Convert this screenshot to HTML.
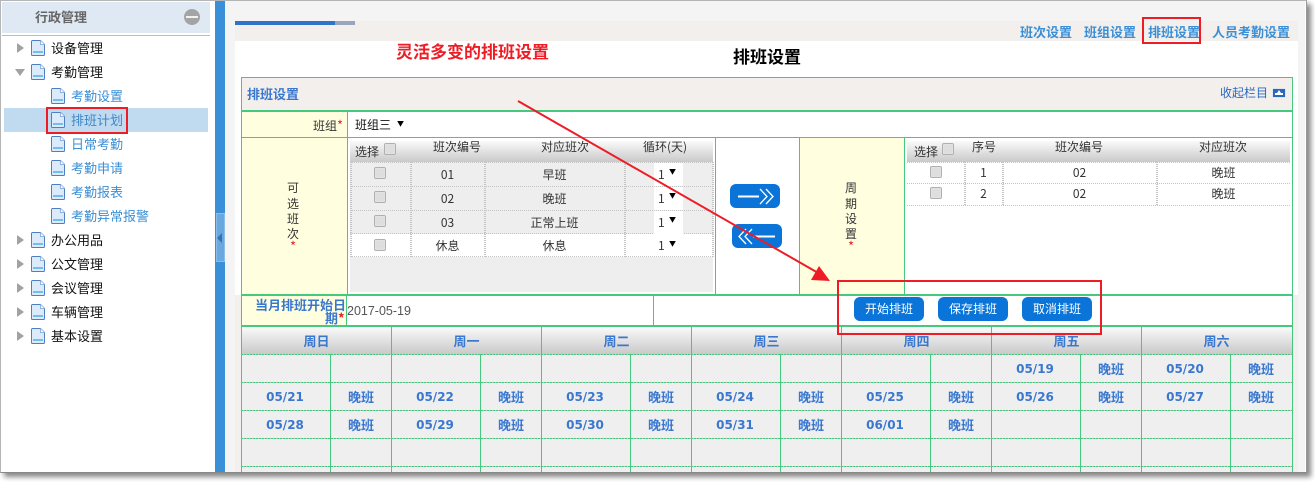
<!DOCTYPE html>
<html lang="zh"><head><meta charset="utf-8"><title>排班设置</title>
<style>
html,body{margin:0;padding:0;background:#fff;width:1315px;height:482px;overflow:hidden}
body{position:relative;font:13px/16px "WenQuanYi Zen Hei","Noto Sans CJK SC",sans-serif;color:#222}
div,span.t,a{position:absolute}
.t{white-space:nowrap;position:absolute}
.c{text-align:center}
.g{background:#45c97f}
.y{background:#ffffe0}
.s{color:#111}
.b{color:#3a8fd6}
.x{font-size:12px;color:#333}
.a{font-size:7px;color:#000}
.hd{background:linear-gradient(#fafafa,#c9c9c9)}
.cb{width:10px;height:10px;border:1px solid #b0b0b0;border-radius:2px;background:#dedede;box-shadow:inset 0 0 1px #fff}
.dv{width:1px;background:repeating-linear-gradient(#c4c4c4 0 1px,transparent 1px 2px);border-right:1px solid transparent}
.dh{height:1px;background:repeating-linear-gradient(90deg,#c4c4c4 0 1px,transparent 1px 2px)}
.btn{background:#0a74d8;border-radius:6px;color:#fff;font-size:12px;text-align:center;height:24px;line-height:24px;width:70px;top:297px}
.calh{top:327px;height:27px;line-height:27px;text-align:center;font-weight:bold;color:#3a78d0;width:149px}
.d{font:bold 12px/16px "DejaVu Sans",sans-serif;color:#3a78d0;text-align:center;width:40px}
.w{font-weight:bold;color:#3a78d0;text-align:center;width:60px}
.hl{left:241px;width:1052px;height:1px;background:repeating-linear-gradient(90deg,#45c97f 0 2px,#b9c9bd 2px 3px)}
.vl{top:354px;height:118px;width:1px;background:#45c97f}
.sel{width:29px;height:23px;background:#fff}
</style></head>
<body>
<svg width="0" height="0" style="position:absolute"><defs>
<symbol id="doc" viewBox="0 0 14 16"><path d="M.5 1.5a1 1 0 0 1 1-1h8l4 4v10a1 1 0 0 1-1 1h-11a1 1 0 0 1-1-1z" fill="#dcebfb" stroke="#4f7fc0"/><path d="M9.5 .5v4h4" fill="#fff" stroke="#8fb2de"/><rect x="2" y="11" width="10" height="2" fill="#74bdf3"/></symbol>
<symbol id="r" viewBox="0 0 7 10"><path d="M0 0l7 5-7 5z" fill="#a2a2a2"/></symbol>
<symbol id="dn" viewBox="0 0 10 7"><path d="M0 0h10L5 7z" fill="#a2a2a2"/></symbol>
</defs></svg>

<!-- window -->
<div style="left:0;top:0;width:1305px;height:471px;border:1px solid #b5b5b5;border-right-color:#999;border-bottom-color:#888;background:#fff;box-shadow:4px 4px 5px #888"></div>

<!-- sidebar -->
<div style="left:2px;top:2px;width:208px;height:31px;background:#dfe9f3"></div>
<div style="left:2px;top:35px;width:208px;height:1px;background:#bbb"></div>
<span class="t" style="left:35px;top:9px;font-weight:bold;color:#666">行政管理</span>
<div style="left:184px;top:9px;width:16px;height:16px;border-radius:50%;background:#a4a4a4"></div>
<div style="left:186px;top:16px;width:12px;height:2px;background:#f2f2f2"></div>
<div style="left:4px;top:108px;width:204px;height:24px;background:#c0daf0"></div>

<svg class="t" style="left:17px;top:43px" width="7" height="10"><use href="#r"/></svg>
<svg class="t" style="left:15px;top:69px" width="10" height="7"><use href="#dn"/></svg>
<svg class="t" style="left:17px;top:235px" width="7" height="10"><use href="#r"/></svg>
<svg class="t" style="left:17px;top:259px" width="7" height="10"><use href="#r"/></svg>
<svg class="t" style="left:17px;top:283px" width="7" height="10"><use href="#r"/></svg>
<svg class="t" style="left:17px;top:307px" width="7" height="10"><use href="#r"/></svg>
<svg class="t" style="left:17px;top:331px" width="7" height="10"><use href="#r"/></svg>

<svg class="t" style="left:31px;top:40px" width="14" height="16"><use href="#doc"/></svg>
<svg class="t" style="left:31px;top:64px" width="14" height="16"><use href="#doc"/></svg>
<svg class="t" style="left:51px;top:88px" width="14" height="16"><use href="#doc"/></svg>
<svg class="t" style="left:51px;top:112px" width="14" height="16"><use href="#doc"/></svg>
<svg class="t" style="left:51px;top:136px" width="14" height="16"><use href="#doc"/></svg>
<svg class="t" style="left:51px;top:160px" width="14" height="16"><use href="#doc"/></svg>
<svg class="t" style="left:51px;top:184px" width="14" height="16"><use href="#doc"/></svg>
<svg class="t" style="left:51px;top:208px" width="14" height="16"><use href="#doc"/></svg>
<svg class="t" style="left:31px;top:232px" width="14" height="16"><use href="#doc"/></svg>
<svg class="t" style="left:31px;top:256px" width="14" height="16"><use href="#doc"/></svg>
<svg class="t" style="left:31px;top:280px" width="14" height="16"><use href="#doc"/></svg>
<svg class="t" style="left:31px;top:304px" width="14" height="16"><use href="#doc"/></svg>
<svg class="t" style="left:31px;top:328px" width="14" height="16"><use href="#doc"/></svg>

<span class="t s" style="left:51px;top:40px">设备管理</span>
<span class="t s" style="left:51px;top:64px">考勤管理</span>
<span class="t b" style="left:71px;top:88px">考勤设置</span>
<span class="t b" style="left:71px;top:112px;color:#3f86c9">排班计划</span>
<span class="t b" style="left:71px;top:136px">日常考勤</span>
<span class="t b" style="left:71px;top:160px">考勤申请</span>
<span class="t b" style="left:71px;top:184px">考勤报表</span>
<span class="t b" style="left:71px;top:208px">考勤异常报警</span>
<span class="t s" style="left:51px;top:232px">办公用品</span>
<span class="t s" style="left:51px;top:256px">公文管理</span>
<span class="t s" style="left:51px;top:280px">会议管理</span>
<span class="t s" style="left:51px;top:304px">车辆管理</span>
<span class="t s" style="left:51px;top:328px">基本设置</span>
<div style="left:46px;top:107px;width:78px;height:23px;border:2px solid #ee1c25"></div>

<!-- splitter -->
<div style="left:215px;top:1px;width:10px;height:471px;background:#398fd8"></div>
<div style="left:216px;top:213px;width:7px;height:47px;background:#6aa9e0;border:1px solid #8cbde8"></div>
<svg class="t" style="left:217px;top:233px" width="6" height="10"><path d="M5 0L0 5l5 5z" fill="#2f74b8"/></svg>

<!-- main -->
<div style="left:225px;top:1px;width:1080px;height:471px;background:#f4f4f4"></div>
<div style="left:235px;top:21px;width:1063px;height:451px;background:#fff"></div>
<div style="left:235px;top:21px;width:1063px;height:20px;background:#f2efed"></div>
<div style="left:235px;top:21px;width:100px;height:4px;background:#2f74c8"></div>
<div style="left:335px;top:21px;width:20px;height:4px;background:#99a5bb"></div>
<div style="left:235px;top:295px;width:6px;height:177px;background:#f2efed"></div>
<div style="left:1293px;top:295px;width:5px;height:177px;background:#f2efed"></div>

<span class="t" style="left:1020px;top:24px;font-weight:bold;color:#3a8fd6">班次设置</span>
<span class="t" style="left:1084px;top:24px;font-weight:bold;color:#3a8fd6">班组设置</span>
<span class="t" style="left:1148px;top:24px;font-weight:bold;color:#3a8fd6">排班设置</span>
<span class="t" style="left:1212px;top:24px;font-weight:bold;color:#3a8fd6">人员考勤设置</span>
<div style="left:1142px;top:17px;width:55px;height:23px;border:2px solid #ee1c25"></div>

<span class="t" style="left:396px;top:41px;font-size:17px;line-height:20px;font-weight:bold;color:#ee1c25">灵活多变的排班设置</span>
<span class="t" style="left:733px;top:46px;font-size:17px;line-height:20px;font-weight:bold;color:#000">排班设置</span>

<!-- form frame -->
<div style="left:242px;top:78px;width:1050px;height:32px;background:#f2efed"></div>
<span class="t" style="left:247px;top:86px;font-weight:bold;color:#3a78d0">排班设置</span>
<span class="t" style="left:1220px;top:85px;font-size:12px;color:#2a68c0">收起栏目</span>
<div style="left:1273px;top:89px;width:12px;height:8px;background:#2a68c0;box-shadow:0 0 1px #9bbbe4"></div>
<svg class="t" style="left:1275px;top:90px" width="8" height="5"><path d="M0 5V3h2L4 0l2 3h2v2z" fill="#fff"/></svg>

<div class="y" style="left:242px;top:112px;width:105px;height:25px"></div>
<div class="y" style="left:242px;top:138px;width:105px;height:156px"></div>
<div class="y" style="left:800px;top:138px;width:104px;height:156px"></div>
<div class="y" style="left:242px;top:296px;width:104px;height:29px"></div>

<span class="t x" style="left:313px;top:117px">班组<span style="color:#ee1c25;font-size:13px">*</span></span>
<span class="t x" style="left:355px;top:117px;color:#111">班组三</span>
<span class="t a" style="left:397px;top:116px">▼</span>

<span class="t x" style="left:287px;top:180px">可</span>
<span class="t x" style="left:287px;top:196px">选</span>
<span class="t x" style="left:287px;top:211px">班</span>
<span class="t x" style="left:287px;top:226px">次</span>
<span class="t" style="left:290px;top:238px;color:#ee1c25">*</span>

<span class="t x" style="left:845px;top:180px">周</span>
<span class="t x" style="left:845px;top:196px">期</span>
<span class="t x" style="left:845px;top:211px">设</span>
<span class="t x" style="left:845px;top:226px">置</span>
<span class="t" style="left:848px;top:238px;color:#ee1c25">*</span>

<!-- left subtable -->
<div style="left:350px;top:141px;width:363px;height:151px;background:#eee"></div>
<div class="hd" style="left:350px;top:141px;width:363px;height:21px"></div>
<div style="left:350px;top:234px;width:363px;height:23px;background:#fff"></div>
<div class="dh" style="left:350px;top:162px;width:363px"></div>
<div class="dh" style="left:350px;top:186px;width:363px"></div>
<div class="dh" style="left:350px;top:210px;width:363px"></div>
<div class="dh" style="left:350px;top:233px;width:363px"></div>
<div class="dh" style="left:350px;top:256px;width:363px"></div>
<div class="dv" style="left:350px;top:162px;height:95px"></div>
<div class="dv" style="left:410px;top:162px;height:95px"></div>
<div class="dv" style="left:484px;top:162px;height:95px"></div>
<div class="dv" style="left:624px;top:162px;height:95px"></div>
<div class="dv" style="left:712px;top:162px;height:95px"></div>
<span class="t x" style="left:355px;top:144px">选择</span>
<div class="cb" style="left:384px;top:143px"></div>
<span class="t x" style="left:433px;top:139px">班次编号</span>
<span class="t x" style="left:541px;top:139px">对应班次</span>
<span class="t x" style="left:643px;top:139px">循环(天)</span>

<div class="cb" style="left:374px;top:167px"></div>
<div class="cb" style="left:374px;top:191px"></div>
<div class="cb" style="left:374px;top:215px"></div>
<div class="cb" style="left:374px;top:239px"></div>
<span class="t c x" style="left:411px;top:167px;width:73px">01</span>
<span class="t c x" style="left:411px;top:191px;width:73px">02</span>
<span class="t c x" style="left:411px;top:215px;width:73px">03</span>
<span class="t c x" style="left:411px;top:238px;width:73px">休息</span>
<span class="t c x" style="left:485px;top:167px;width:139px">早班</span>
<span class="t c x" style="left:485px;top:191px;width:139px">晚班</span>
<span class="t c x" style="left:485px;top:215px;width:139px">正常上班</span>
<span class="t c x" style="left:485px;top:238px;width:139px">休息</span>

<div class="sel" style="left:654px;top:163px"></div>
<div class="sel" style="left:654px;top:187px"></div>
<div class="sel" style="left:654px;top:211px"></div>
<span class="t x" style="left:658px;top:167px">1</span>
<span class="t x" style="left:658px;top:191px">1</span>
<span class="t x" style="left:658px;top:215px">1</span>
<span class="t x" style="left:658px;top:238px">1</span>
<span class="t a" style="left:669px;top:164px">▼</span>
<span class="t a" style="left:669px;top:188px">▼</span>
<span class="t a" style="left:669px;top:212px">▼</span>
<span class="t a" style="left:669px;top:236px">▼</span>

<!-- move buttons -->
<div style="left:730px;top:184px;width:50px;height:24px;background:#0a74d8;border-radius:6px"></div>
<svg class="t" style="left:730px;top:184px" width="50" height="24" fill="none" stroke="#fff"><path d="M8 12.5h21" stroke-width="2"/><path d="M30 5l7 7.500-7 7.500M36 5l7 7.500-7 7.500" stroke-width="1.300"/></svg>
<div style="left:732px;top:224px;width:50px;height:24px;background:#0a74d8;border-radius:6px"></div>
<svg class="t" style="left:732px;top:224px" width="50" height="24" fill="none" stroke="#fff"><path d="M21 12.500h22" stroke-width="2"/><path d="M14 5l-7 7.500 7 7.500M20 5l-7 7.500 7 7.500" stroke-width="1.300"/></svg>

<!-- right subtable -->
<div class="hd" style="left:907px;top:141px;width:383px;height:21px"></div>
<div class="dh" style="left:907px;top:162px;width:383px"></div>
<div class="dh" style="left:907px;top:183px;width:383px"></div>
<div class="dh" style="left:907px;top:205px;width:383px"></div>
<div class="dv" style="left:964px;top:162px;height:43px"></div>
<div class="dv" style="left:1002px;top:162px;height:43px"></div>
<div class="dv" style="left:1156px;top:162px;height:43px"></div>
<span class="t x" style="left:914px;top:144px">选择</span>
<div class="cb" style="left:942px;top:143px"></div>
<span class="t x" style="left:972px;top:139px">序号</span>
<span class="t x" style="left:1055px;top:139px">班次编号</span>
<span class="t x" style="left:1199px;top:139px">对应班次</span>
<div class="cb" style="left:930px;top:166px"></div>
<div class="cb" style="left:930px;top:187px"></div>
<span class="t c x" style="left:965px;top:165px;width:37px">1</span>
<span class="t c x" style="left:965px;top:186px;width:37px">2</span>
<span class="t c x" style="left:1003px;top:165px;width:153px">02</span>
<span class="t c x" style="left:1003px;top:186px;width:153px">02</span>
<span class="t c x" style="left:1157px;top:165px;width:133px">晚班</span>
<span class="t c x" style="left:1157px;top:186px;width:133px">晚班</span>

<!-- date row -->
<span class="t" style="left:255px;top:297px;font-weight:bold;color:#3a78d0;line-height:15px">当月排班开始日</span>
<span class="t" style="left:325px;top:310px;font-weight:bold;color:#3a78d0;line-height:15px">期<span style="color:#ee1c25">*</span></span>
<span class="t" style="left:347px;top:303px;font:12.500px/16px 'Liberation Sans',sans-serif;color:#555">2017-05-19</span>
<div class="btn" style="left:854px">开始排班</div>
<div class="btn" style="left:938px">保存排班</div>
<div class="btn" style="left:1022px">取消排班</div>

<!-- calendar -->
<div class="hd" style="left:242px;top:327px;width:1050px;height:27px"></div>
<div style="left:242px;top:355px;width:1050px;height:117px;background:#efefef"></div>
<div class="calh" style="left:242px">周日</div>
<div class="calh" style="left:392px">周一</div>
<div class="calh" style="left:542px">周二</div>
<div class="calh" style="left:692px">周三</div>
<div class="calh" style="left:842px">周四</div>
<div class="calh" style="left:992px">周五</div>
<div class="calh" style="left:1142px">周六</div>

<div class="t d" style="left:1015px;top:361px">05/19</div>
<div class="t w" style="left:1081px;top:361px">晚班</div>
<div class="t d" style="left:1165px;top:361px">05/20</div>
<div class="t w" style="left:1231px;top:361px">晚班</div>

<div class="t d" style="left:265px;top:389px">05/21</div>
<div class="t d" style="left:415px;top:389px">05/22</div>
<div class="t d" style="left:565px;top:389px">05/23</div>
<div class="t d" style="left:715px;top:389px">05/24</div>
<div class="t d" style="left:865px;top:389px">05/25</div>
<div class="t d" style="left:1015px;top:389px">05/26</div>
<div class="t d" style="left:1165px;top:389px">05/27</div>
<div class="t w" style="left:331px;top:389px">晚班</div>
<div class="t w" style="left:481px;top:389px">晚班</div>
<div class="t w" style="left:631px;top:389px">晚班</div>
<div class="t w" style="left:781px;top:389px">晚班</div>
<div class="t w" style="left:931px;top:389px">晚班</div>
<div class="t w" style="left:1081px;top:389px">晚班</div>
<div class="t w" style="left:1231px;top:389px">晚班</div>

<div class="t d" style="left:265px;top:417px">05/28</div>
<div class="t d" style="left:415px;top:417px">05/29</div>
<div class="t d" style="left:565px;top:417px">05/30</div>
<div class="t d" style="left:715px;top:417px">05/31</div>
<div class="t d" style="left:865px;top:417px">06/01</div>
<div class="t w" style="left:331px;top:417px">晚班</div>
<div class="t w" style="left:481px;top:417px">晚班</div>
<div class="t w" style="left:631px;top:417px">晚班</div>
<div class="t w" style="left:781px;top:417px">晚班</div>
<div class="t w" style="left:931px;top:417px">晚班</div>

<div class="hl" style="top:354px"></div>
<div class="hl" style="top:382px"></div>
<div class="hl" style="top:410px"></div>
<div class="hl" style="top:438px"></div>
<div class="hl" style="top:466px"></div>
<div class="vl" style="left:330px"></div>
<div class="vl" style="left:480px"></div>
<div class="vl" style="left:630px"></div>
<div class="vl" style="left:780px"></div>
<div class="vl" style="left:930px"></div>
<div class="vl" style="left:1080px"></div>
<div class="vl" style="left:1230px"></div>
<div class="vl" style="left:391px;top:326px;height:146px"></div>
<div class="vl" style="left:541px;top:326px;height:146px"></div>
<div class="vl" style="left:691px;top:326px;height:146px"></div>
<div class="vl" style="left:841px;top:326px;height:146px"></div>
<div class="vl" style="left:991px;top:326px;height:146px"></div>
<div class="vl" style="left:1141px;top:326px;height:146px"></div>

<!-- frame lines -->
<div class="g" style="left:241px;top:77px;width:1052px;height:1px"></div>
<div class="g" style="left:241px;top:110px;width:1052px;height:2px"></div>
<div class="g" style="left:241px;top:137px;width:1052px;height:1px"></div>
<div class="g" style="left:241px;top:294px;width:1052px;height:2px"></div>
<div class="g" style="left:241px;top:325px;width:1052px;height:2px"></div>
<div class="g" style="left:241px;top:77px;width:1px;height:395px"></div>
<div class="g" style="left:1292px;top:77px;width:1px;height:395px"></div>
<div class="g" style="left:347px;top:112px;width:1px;height:182px"></div>
<div class="g" style="left:346px;top:296px;width:1px;height:29px"></div>
<div class="g" style="left:653px;top:296px;width:1px;height:29px"></div>
<div class="g" style="left:715px;top:138px;width:1px;height:156px"></div>
<div class="g" style="left:799px;top:138px;width:1px;height:156px"></div>
<div class="g" style="left:904px;top:138px;width:1px;height:156px"></div>

<!-- annotations -->
<svg class="t" style="left:0;top:0" width="1315" height="482"><path d="M518 101L820 274" stroke="#ee1c25" stroke-width="2" fill="none"/><path d="M830 281L811 280 819 266z" fill="#ee1c25"/></svg>
<div style="left:837px;top:280px;width:261px;height:51px;border:2px solid #ee1c25"></div>
</body></html>
